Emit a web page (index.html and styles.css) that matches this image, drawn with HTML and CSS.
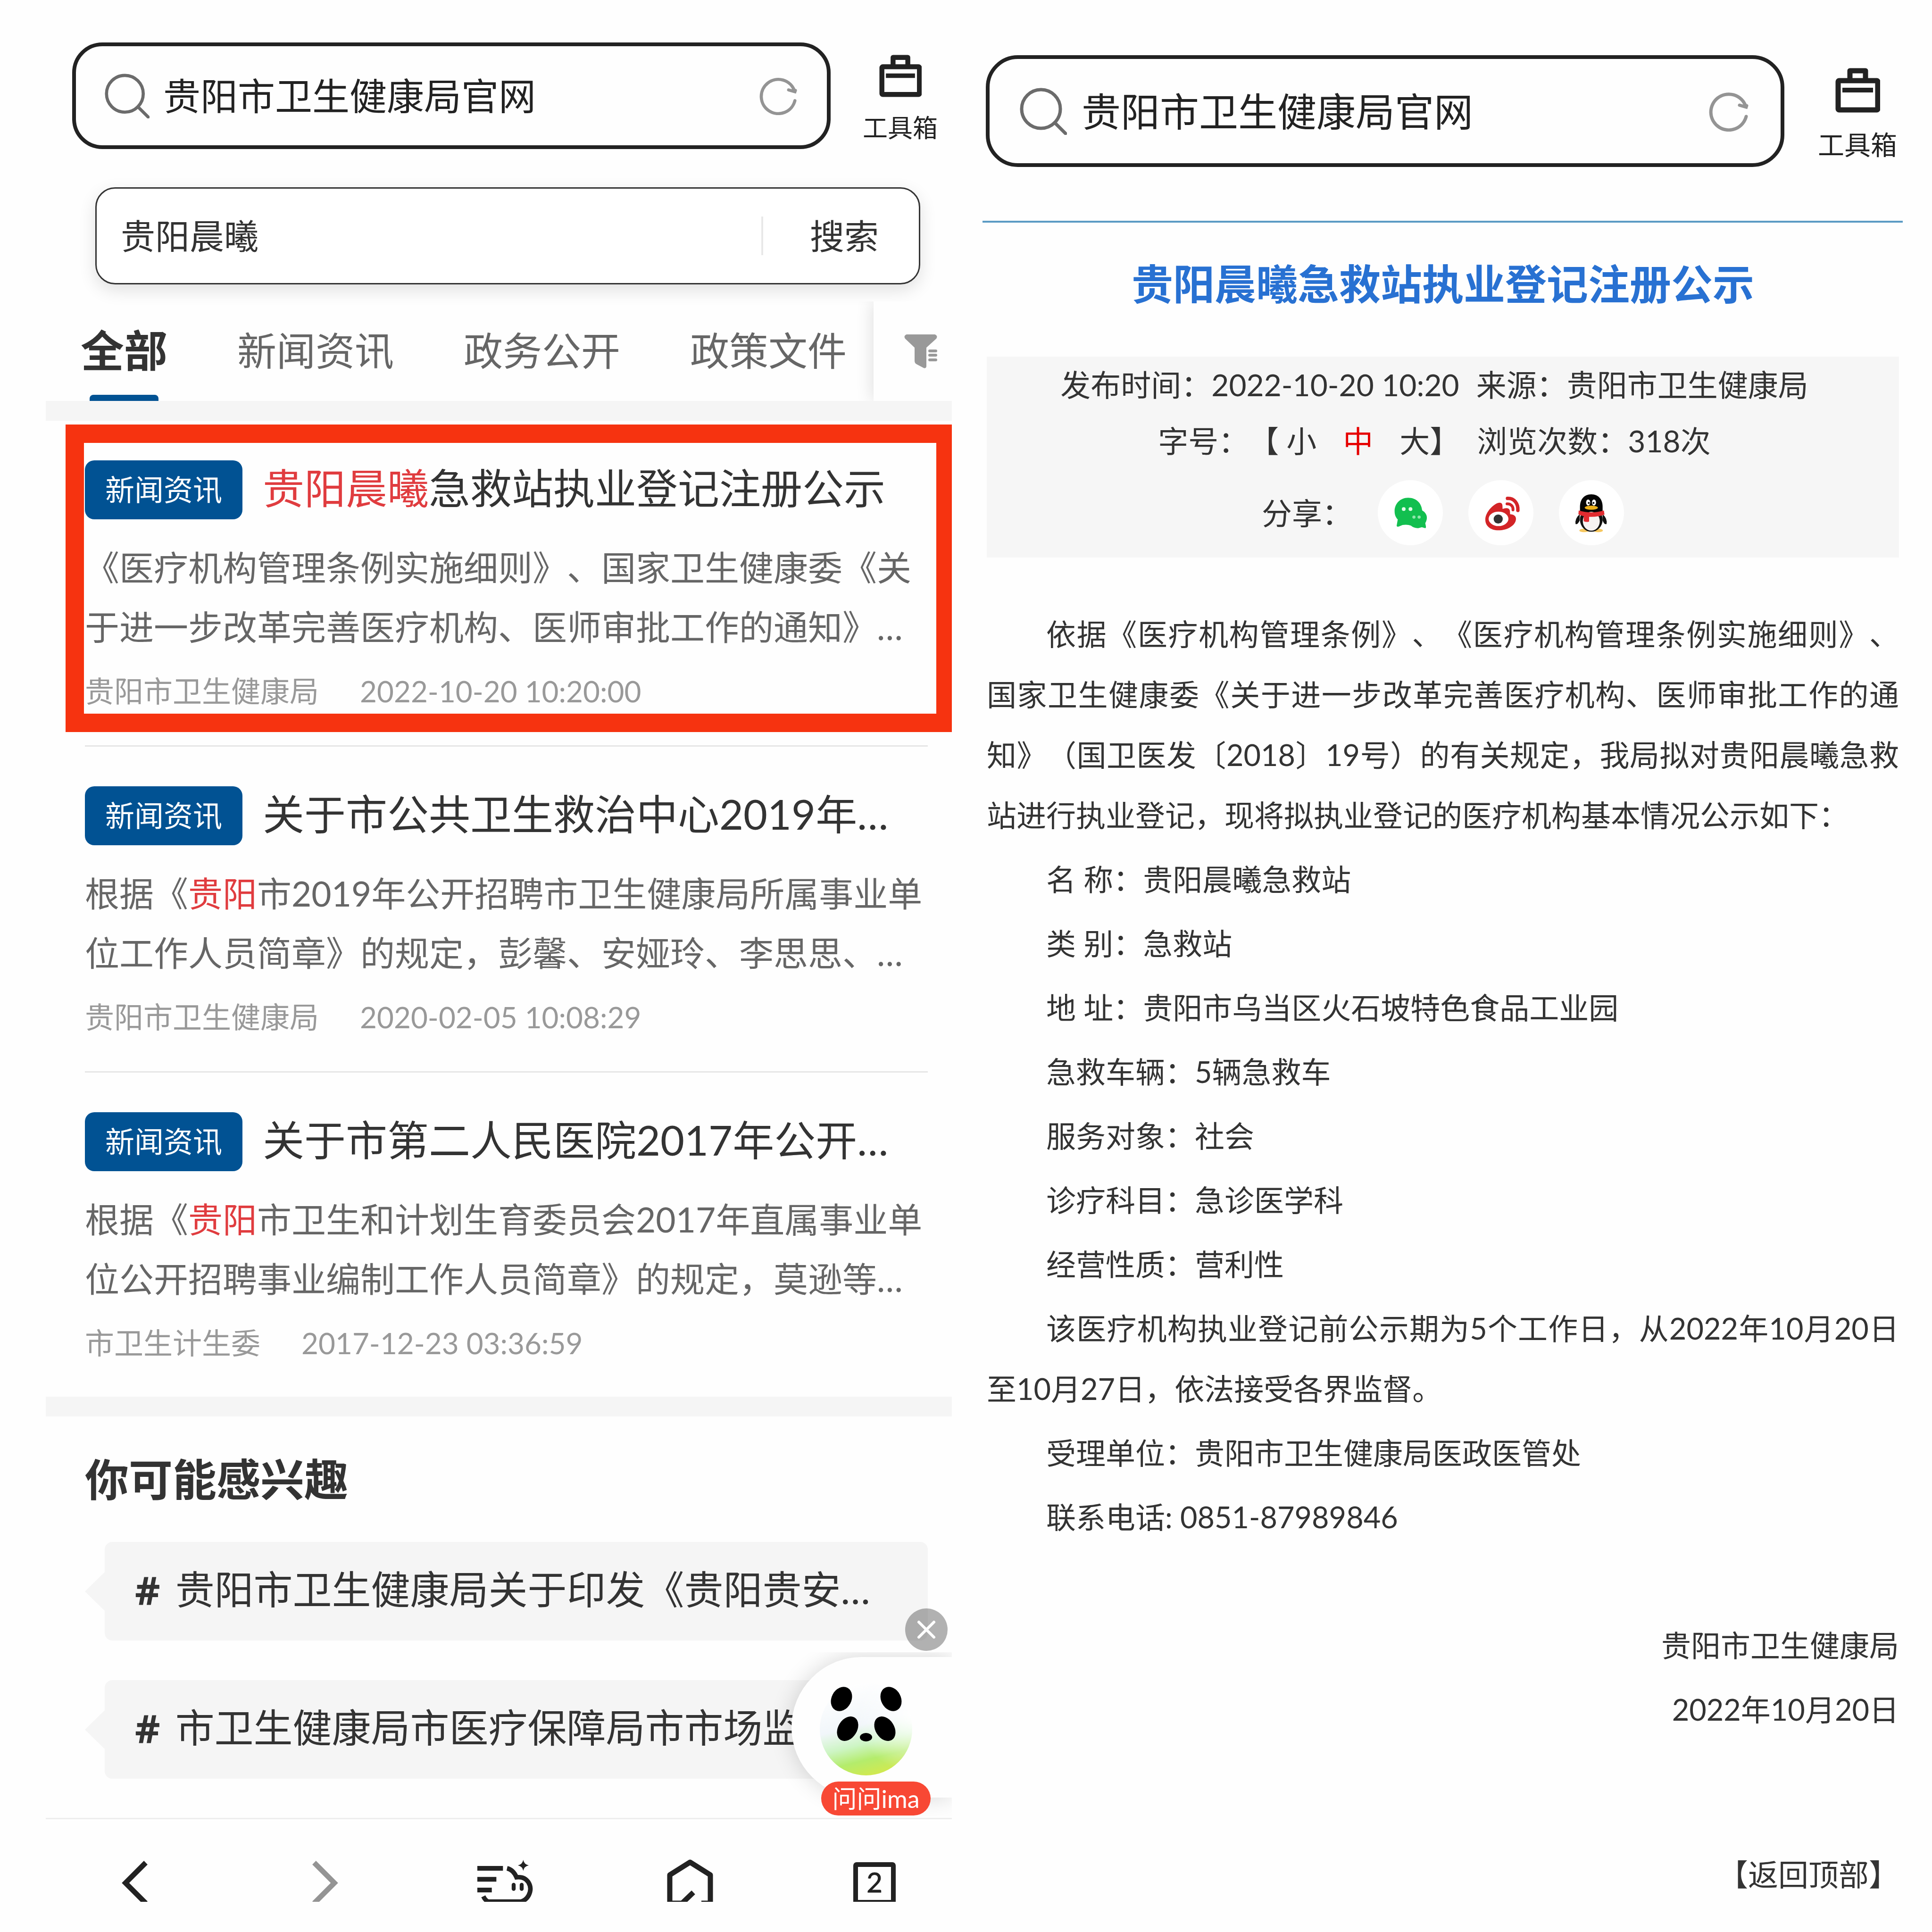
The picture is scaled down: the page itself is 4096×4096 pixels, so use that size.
FILE: index.html
```html
<!DOCTYPE html>
<html lang="zh-CN">
<head>
    <meta charset="UTF-8">
    <meta name="viewport" content="width=device-width, initial-scale=1.0">
    <title>贵阳市卫生健康局官网</title>
    <link rel="stylesheet" href="styles.css">
</head>
<body>
    <svg class="symbols" aria-hidden="true">
        <symbol id="icon-search" viewBox="0 0 100 100">
            <circle cx="45" cy="45" r="41" fill="none" stroke="#6b6b6b" stroke-width="7"/>
            <path d="M74 74L97 97" stroke="#6b6b6b" stroke-width="7" stroke-linecap="round"/>
        </symbol>
        <symbol id="icon-refresh" viewBox="0 0 84 86">
            <path d="M78 32A38 38 0 1 0 79 54M65 30L79 34L80 31" fill="none" stroke="#949494" stroke-width="7" stroke-linecap="round"/>
        </symbol>
        <symbol id="icon-toolbox" viewBox="0 0 95 95">
            <path d="M31 24V6h33v18" fill="none" stroke="#222" stroke-width="11" stroke-linejoin="round"/>
            <rect x="6" y="27" width="84" height="62" rx="2" fill="none" stroke="#222" stroke-width="11"/>
            <path d="M15 47H80" stroke="#222" stroke-width="10"/>
        </symbol>
    </svg>

    <main class="page">
        <section class="screen results">
            <header class="topbar">
                <div class="address">
                    <svg class="address-icon"><use href="#icon-search"/></svg>
                    <input type="text" value="贵阳市卫生健康局官网" aria-label="地址栏">
                    <button type="button" class="refresh" aria-label="刷新"><svg><use href="#icon-refresh"/></svg></button>
                </div>
                <button type="button" class="toolbox">
                    <svg><use href="#icon-toolbox"/></svg>
                    <span>工具箱</span>
                </button>
            </header>

            <form class="site-search">
                <input type="text" value="贵阳晨曦" aria-label="搜索内容">
                <button type="button">搜索</button>
            </form>

            <div class="tabs-row">
                <nav class="tabs">
                    <a href="#" class="active">全部</a>
                    <a href="#">新闻资讯</a>
                    <a href="#">政务公开</a>
                    <a href="#">政策文件</a>
                </nav>
                <button type="button" class="filter" aria-label="筛选">
                    <svg viewBox="0 0 70 72">
                        <path d="M5 0H65Q72 3 68 9L47 28V68Q46 73 41 71L26 63Q22 61 22 56V28L2 9Q-2 3 5 0Z" fill="#999"/>
                        <path d="M54 35H67M54 44H67M54 54H67" stroke="#999" stroke-width="6" stroke-linecap="round"/>
                    </svg>
                </button>
            </div>
            <div class="strip"></div>

            <div class="list">
                <article class="item marked">
                    <h2><span class="badge">新闻资讯</span><a href="#"><em>贵阳晨曦</em>急救站执业登记注册公示</a></h2>
                    <p class="summary">《医疗机构管理条例实施细则》、国家卫生健康委《关于进一步改革完善医疗机构、医师审批工作的通知》…</p>
                    <p class="meta"><span>贵阳市卫生健康局</span><time>2022-10-20 10:20:00</time></p>
                </article>
                <article class="item">
                    <h2><span class="badge">新闻资讯</span><a href="#">关于市公共卫生救治中心2019年…</a></h2>
                    <p class="summary">根据《<em>贵阳</em>市2019年公开招聘市卫生健康局所属事业单位工作人员简章》的规定，彭馨、安娅玲、李思思、…</p>
                    <p class="meta"><span>贵阳市卫生健康局</span><time>2020-02-05 10:08:29</time></p>
                </article>
                <article class="item">
                    <h2><span class="badge">新闻资讯</span><a href="#">关于市第二人民医院2017年公开…</a></h2>
                    <p class="summary">根据《<em>贵阳</em>市卫生和计划生育委员会2017年直属事业单位公开招聘事业编制工作人员简章》的规定，莫逊等…</p>
                    <p class="meta"><span>市卫生计生委</span><time>2017-12-23 03:36:59</time></p>
                </article>
            </div>
            <div class="strip"></div>

            <div class="interest">
                <h3>你可能感兴趣</h3>
                <a href="#" class="chip"><b>#</b>贵阳市卫生健康局关于印发《贵阳贵安…</a>
                <a href="#" class="chip"><b>#</b>市卫生健康局市医疗保障局市市场监</a>

                <div class="assistant">
                    <div class="assistant-pill">
                        <svg class="panda" viewBox="0 0 200 210">
                            <defs>
                                <linearGradient id="face" x1="0.35" y1="0" x2="0.6" y2="1">
                                    <stop offset="0" stop-color="#fff"/>
                                    <stop offset="0.45" stop-color="#f1f6fa"/>
                                    <stop offset="0.65" stop-color="#cdf5c4"/>
                                    <stop offset="0.82" stop-color="#b4ec6c"/>
                                    <stop offset="1" stop-color="#d3e94e"/>
                                </linearGradient>
                                <radialGradient id="glow" cx="1" cy="0.35" r="0.6">
                                    <stop offset="0" stop-color="#fff"/>
                                    <stop offset="1" stop-color="#fff" stop-opacity="0"/>
                                </radialGradient>
                            </defs>
                            <circle cx="100" cy="101" r="98" fill="url(#face)"/>
                            <circle cx="100" cy="101" r="99" fill="url(#glow)"/>
                            <ellipse cx="48" cy="37" rx="21" ry="27" transform="rotate(28 48 37)"/>
                            <ellipse cx="153" cy="37" rx="21" ry="27" transform="rotate(-28 153 37)"/>
                            <ellipse cx="61" cy="100" rx="20" ry="28" transform="rotate(32 61 100)"/>
                            <ellipse cx="140" cy="100" rx="20" ry="28" transform="rotate(-32 140 100)"/>
                            <ellipse cx="100" cy="118" rx="13" ry="9"/>
                        </svg>
                    </div>
                    <button type="button" class="assistant-label">问问ima</button>
                    <button type="button" class="assistant-close" aria-label="关闭">
                        <svg viewBox="0 0 90 90"><path d="M29 29L61 61M61 29L29 61" stroke="#fff" stroke-width="6" stroke-linecap="round"/></svg>
                    </button>
                </div>
            </div>

            <nav class="bottom-nav">
                <button type="button" aria-label="后退">
                    <svg viewBox="0 0 100 90"><path d="M71 7L28 50L71 93" fill="none" stroke="#222" stroke-width="11"/></svg>
                </button>
                <button type="button" aria-label="前进">
                    <svg viewBox="0 0 100 90"><path d="M36 7L79 50L36 93" fill="none" stroke="#949494" stroke-width="11"/></svg>
                </button>
                <button type="button" aria-label="助手" class="wide">
                    <svg viewBox="36 100 360 270">
                        <path d="M39 157H202M39 227H160M39 295H131" stroke="#222" stroke-width="30"/>
                        <path d="M228 157Q268 166 288 214Q340 208 364 246Q388 285 366 328Q350 358 318 369H112Q92 366 77 335" fill="none" stroke="#222" stroke-width="29"/>
                        <path d="M270 262V288M321 262V288" stroke="#222" stroke-width="25" stroke-linecap="round"/>
                        <path d="M331 103Q336 132 366 138Q336 144 331 173Q326 144 297 138Q326 132 331 103Z" fill="#222"/>
                    </svg>
                </button>
                <button type="button" aria-label="主页">
                    <svg viewBox="0 0 100 90"><path d="M34 93H7V33L50 6L93 33V93H74M32 94L57 70" fill="none" stroke="#222" stroke-width="11" stroke-linejoin="round"/></svg>
                </button>
                <button type="button" aria-label="标签页">
                    <svg viewBox="0 0 100 90">
                        <rect x="10" y="11" width="80" height="80" rx="2" fill="none" stroke="#222" stroke-width="10"/>
                        <text x="50" y="70" text-anchor="middle" class="tab-count">2</text>
                    </svg>
                </button>
            </nav>
        </section>

        <section class="screen detail">
            <header class="topbar">
                <div class="address">
                    <svg class="address-icon"><use href="#icon-search"/></svg>
                    <input type="text" value="贵阳市卫生健康局官网" aria-label="地址栏">
                    <button type="button" class="refresh" aria-label="刷新"><svg><use href="#icon-refresh"/></svg></button>
                </div>
                <button type="button" class="toolbox">
                    <svg><use href="#icon-toolbox"/></svg>
                    <span>工具箱</span>
                </button>
            </header>

            <div class="content">
                <h1>贵阳晨曦急救站执业登记注册公示</h1>
                <div class="info">
                    <div class="info-row">
                        <span>发布时间：2022-10-20 10:20</span>
                        <span>来源：贵阳市卫生健康局</span>
                    </div>
                    <div class="info-row">
                        <span class="sizes">字号：【<a href="#">小</a><a href="#" class="on">中</a><a href="#">大</a>】</span>
                        <span>浏览次数：318次</span>
                    </div>
                    <div class="share">
                        <span>分享：</span>
                        <a href="#" aria-label="微信">
                            <svg viewBox="60 55 414 414">
                                <path d="M253 167C203 167 167 205 167 252C167 275 174 291 187 305L180 345Q182 354 194 350L218 340Q250 336 270 344Q292 362 318 360L340 354L362 360Q368 358 366 348L362 328Q374 308 372 288Q368 262 342 247C338 200 303 167 253 167Z" fill="#12bf4f"/>
                                <g fill="#e4fbe9">
                                    <circle cx="225" cy="239" r="12"/>
                                    <circle cx="268" cy="239" r="12"/>
                                </g>
                                <g fill="#8fe6ac">
                                    <circle cx="290" cy="290" r="10"/>
                                    <circle cx="323" cy="290" r="10"/>
                                </g>
                            </svg>
                        </a>
                        <a href="#" aria-label="微博">
                            <svg viewBox="38 55 414 414">
                                <path d="M238 198C205 198 146 255 146 306C146 350 184 374 228 374C290 374 341 340 341 300C341 284 326 272 304 272C302 258 306 240 290 234Q276 230 256 238C254 222 260 200 238 198Z" fill="#d32427"/>
                                <ellipse cx="230" cy="301" rx="63" ry="46" fill="#fff"/>
                                <circle cx="228" cy="302" r="29" fill="#333"/>
                                <path d="M287 171C330 168 356 205 353 247" fill="none" stroke="#d32427" stroke-width="22" stroke-linecap="round"/>
                                <path d="M284 206C308 204 324 222 322 244" fill="none" stroke="#d32427" stroke-width="18" stroke-linecap="round"/>
                            </svg>
                        </a>
                        <a href="#" aria-label="QQ">
                            <svg viewBox="612 55 414 414">
                                <ellipse cx="772" cy="375" rx="30" ry="11" fill="#f6c75f"/>
                                <ellipse cx="862" cy="375" rx="30" ry="11" fill="#f6c75f"/>
                                <path d="M745 270Q712 300 718 334Q730 340 744 312ZM890 270Q922 300 915 334Q902 340 890 312Z" fill="#111"/>
                                <ellipse cx="818" cy="306" rx="72" ry="77" fill="#111"/>
                                <path d="M818 145C770 145 746 180 746 224V265H890V224C890 180 866 145 818 145Z" fill="#050505"/>
                                <ellipse cx="818" cy="316" rx="54" ry="60" fill="#f6f2f2"/>
                                <ellipse cx="798" cy="197" rx="13" ry="19" fill="#fff"/>
                                <ellipse cx="835" cy="197" rx="13" ry="19" fill="#fff"/>
                                <circle cx="802" cy="200" r="6"/>
                                <circle cx="832" cy="200" r="6"/>
                                <ellipse cx="818" cy="230" rx="42" ry="13" fill="#eeb21b"/>
                                <path d="M738 248Q818 272 898 248L902 274Q860 290 804 288V318Q786 324 770 316V284Q750 280 736 272Z" fill="#e02b30"/>
                            </svg>
                        </a>
                    </div>
                </div>

                <article class="notice">
                    <p>依据《医疗机构管理条例》、《医疗机构管理条例实施细则》、国家卫生健康委《关于进一步改革完善医疗机构、医师审批工作的通知》（国卫医发〔2018〕19号）的有关规定，我局拟对贵阳晨曦急救站进行执业登记，现将拟执业登记的医疗机构基本情况公示如下：</p>
                    <p>名 称：贵阳晨曦急救站</p>
                    <p>类 别：急救站</p>
                    <p>地 址：贵阳市乌当区火石坡特色食品工业园</p>
                    <p>急救车辆：5辆急救车</p>
                    <p>服务对象：社会</p>
                    <p>诊疗科目：急诊医学科</p>
                    <p>经营性质：营利性</p>
                    <p>该医疗机构执业登记前公示期为5个工作日，从2022年10月20日至10月27日，依法接受各界监督。</p>
                    <p>受理单位：贵阳市卫生健康局医政医管处</p>
                    <p>联系电话: 0851-87989846</p>
                    <div class="signature">
                        <p>贵阳市卫生健康局</p>
                        <p>2022年10月20日</p>
                    </div>
                </article>
                <a href="#" class="back-top">【返回顶部】</a>
            </div>
        </section>
    </main>
</body>
</html>
```
FILE: styles.css
```css
* {
    box-sizing: border-box;
    margin: 0;
    padding: 0;
}

body {
    font-family: Lato, "Noto Sans CJK SC", sans-serif;
    color: #333;
    background: #fefefe;
    text-spacing-trim: space-all;
}

a {
    color: inherit;
    text-decoration: none;
}

button, input {
    font: inherit;
    color: inherit;
    border: none;
    background: none;
}

em {
    font-style: normal;
    color: #e03c3f;
}

svg {
    display: block;
}

.symbols {
    position: absolute;
    width: 0;
    height: 0;
}

.page {
    display: grid;
    grid-template-columns: 1921fr 1951fr;
    gap: 65px;
    padding: 0 62px 0 97px;
    align-items: start;
}

.screen {
    min-width: 0;
}

/* browser address bar */
.topbar {
    display: flex;
    align-items: center;
    color: #222;
}

.address {
    flex: 1;
    display: flex;
    align-items: center;
    min-width: 0;
    border: 8px solid #222;
}

.address input {
    flex: 1;
    min-width: 0;
    height: 130px;
    padding-bottom: 8px;
    outline: none;
}

.toolbox {
    display: flex;
    flex-direction: column;
    align-items: center;
    line-height: 60px;
    padding-top: 10px;
}

.results .topbar {
    padding: 90px 30px 0 56px;
    gap: 68px;
}

.results .address {
    height: 226px;
    padding: 0 63px 0 61px;
    border-radius: 64px;
    gap: 29px;
    font-size: 79px;
}

.results .address-icon {
    width: 95px;
    height: 95px;
}

.results .refresh svg {
    width: 80px;
    height: 82px;
}

.results .toolbox {
    font-size: 53px;
    gap: 35px;
}

.results .toolbox svg {
    width: 90px;
    height: 90px;
}

.detail .topbar {
    padding: 117px 12px 0 7px;
    gap: 71px;
}

.detail .address {
    height: 237px;
    padding: 0 68px 0 64px;
    border-radius: 68px;
    gap: 31px;
    font-size: 83px;
}

.detail .address-icon {
    width: 100px;
    height: 100px;
}

.detail .refresh svg {
    width: 84px;
    height: 86px;
}

.detail .toolbox {
    font-size: 56px;
    gap: 38px;
}

.detail .toolbox svg {
    width: 95px;
    height: 95px;
}

/* search form */
.site-search {
    display: flex;
    align-items: center;
    height: 206px;
    margin: 81px 67px 36px 105px;
    border: 3px solid #333;
    border-radius: 42px;
    background: #fff;
    box-shadow: 0 12px 36px rgba(0, 0, 0, 0.12);
    font-size: 73px;
}

.site-search input {
    flex: 1;
    min-width: 0;
    height: 120px;
    padding: 0 0 8px 51px;
    outline: none;
}

.site-search button {
    width: 334px;
    height: 82px;
    line-height: 78px;
    padding-left: 14px;
    border-left: 4px solid #e8e8e8;
}

/* tabs */
.tabs-row {
    display: flex;
    height: 211px;
    overflow: hidden;
}

.tabs {
    flex: 1;
    display: flex;
    gap: 148px;
    padding-left: 74px;
    line-height: 208px;
    font-size: 83px;
    color: #666;
    white-space: nowrap;
}

.tabs .active {
    position: relative;
    font-size: 92px;
    font-weight: bold;
    color: #333;
}

.tabs .active::after {
    content: "";
    position: absolute;
    left: 50%;
    bottom: 0;
    width: 146px;
    height: 13px;
    margin-left: -73px;
    border-radius: 8px 8px 0 0;
    background: #015293;
}

.filter {
    width: 166px;
    display: flex;
    align-items: center;
    padding-left: 65px;
    background: #fefefe;
    box-shadow: 0 0 36px rgba(0, 0, 0, 0.14);
}

.filter svg {
    width: 70px;
    height: 72px;
}

.strip {
    height: 42px;
    background: #f5f5f5;
}

/* result list */
.list {
    padding-bottom: 71px;
}

.item {
    margin: 0 51px 0 83px;
    padding-top: 84px;
    border-top: 3px solid #e6e6e6;
}

.item + .item {
    margin-top: 72px;
}

.item.marked {
    margin: 8px 0 28px 42px;
    padding: 37px 18px 5px 2px;
    border: 39px solid #f63310;
    border-right-width: 33px;
}

.item.marked + .item {
    margin-top: 0;
}

.item h2 {
    display: flex;
    align-items: center;
    gap: 43px;
    height: 125px;
    font-size: 88px;
    line-height: 125px;
    font-weight: normal;
    white-space: nowrap;
}

.item h2 a {
    padding-bottom: 9px;
}

.badge {
    width: 334px;
    line-height: 125px;
    border-radius: 20px;
    background: #015293;
    color: #fff;
    font-size: 62px;
    text-align: center;
}

.summary {
    margin-top: 39px;
    font-size: 73px;
    line-height: 126px;
    color: #666;
}

.meta {
    display: flex;
    gap: 87px;
    margin-top: 30px;
    font-size: 62px;
    line-height: 86px;
    color: #999;
}

/* recommendations */
.interest {
    position: relative;
    padding: 68px 51px 83px 83px;
    border-bottom: 3px solid #eee;
}

.interest h3 {
    margin-bottom: 68px;
    font-size: 93px;
    line-height: 130px;
}

.chip {
    position: relative;
    display: flex;
    gap: 32px;
    height: 209px;
    margin-left: 42px;
    padding-left: 64px;
    border-radius: 16px;
    background: #f5f5f5;
    font-size: 83px;
    line-height: 201px;
    white-space: nowrap;
}

.chip b {
    font-family: "Noto Sans", sans-serif;
}

.chip + .chip {
    margin-top: 84px;
}

.chip::before {
    content: "";
    position: absolute;
    left: -42px;
    top: 64px;
    border: solid transparent;
    border-width: 41px 42px 41px 0;
    border-right-color: #f5f5f5;
}

/* floating assistant, lies over the chips */
.assistant {
    position: absolute;
    right: 0;
    bottom: 43px;
    width: 340px;
    height: 298px;
}

.assistant-pill {
    height: 298px;
    padding: 52px 0 0 58px;
    border-radius: 149px 0 0 149px;
    background: #fefefe;
    box-shadow: 0 0 48px rgba(0, 0, 0, 0.16);
    clip-path: inset(-10px 0 -40px -60px);
}

.panda {
    width: 200px;
    height: 210px;
}

.assistant-label {
    position: absolute;
    left: 63px;
    bottom: -38px;
    width: 232px;
    height: 72px;
    border-radius: 36px;
    background: #f84834;
    color: #fff;
    font-size: 52px;
    line-height: 72px;
    white-space: nowrap;
}

.assistant-close {
    position: absolute;
    right: 9px;
    top: -103px;
    width: 90px;
    height: 90px;
    border-radius: 50%;
    background: rgba(0, 0, 0, 0.3);
}

.bottom-nav {
    display: flex;
    justify-content: space-between;
    height: 175px;
    padding: 85px 114px 0 141px;
    overflow: hidden;
}

.bottom-nav svg {
    width: 100px;
    height: 90px;
}

.bottom-nav .wide {
    margin: 0 -10px;
}

.bottom-nav .wide svg {
    width: 120px;
}

.tab-count {
    font-size: 58px;
    fill: #222;
    stroke: #222;
}

/* notice page */
.content {
    margin-top: 114px;
    border-top: 4px solid #5b9bc4;
    padding: 0 8px 0 9px;
}

.content h1 {
    padding: 64px 0 90px;
    font-size: 88px;
    line-height: 130px;
    color: #2871d2;
    text-align: center;
}

.info {
    height: 426px;
    background: #f6f6f6;
    font-size: 64px;
    line-height: 119px;
}

.info-row {
    display: flex;
    justify-content: center;
    gap: 36px;
    padding-right: 36px;
}

.sizes a {
    margin-left: 16px;
}

.sizes a + a {
    margin-left: 56px;
}

.sizes .on {
    color: #e60000;
}

.share {
    display: flex;
    justify-content: center;
    align-items: center;
    gap: 54px;
    padding-top: 24px;
}

.share a {
    width: 138px;
    height: 138px;
    border-radius: 50%;
    background: #fff;
}

.notice {
    padding-top: 98px;
    font-size: 63px;
    line-height: 128px;
}

.notice p {
    margin-bottom: 8px;
    text-indent: 2em;
    text-align: justify;
}

.notice .signature {
    padding-top: 136px;
}

.notice .signature p {
    text-align: right;
}

.back-top {
    display: block;
    margin-top: 222px;
    font-size: 64px;
    line-height: 128px;
    text-align: right;
}
```
